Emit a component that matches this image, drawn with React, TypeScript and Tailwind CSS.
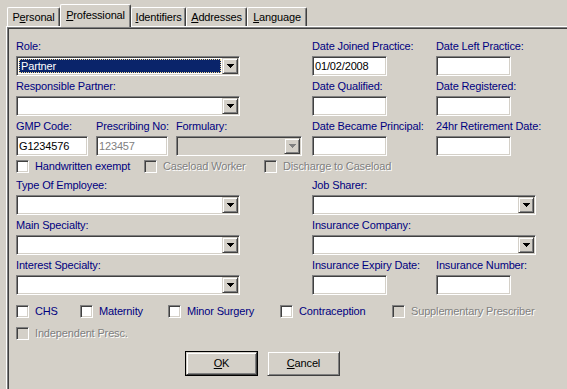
import React from "react";

const sunken =
  "border border-t-[#808080] border-l-[#808080] border-b-white border-r-white shadow-[inset_1px_1px_0_#404040,inset_-1px_-1px_0_#d4d0c8] p-px";
const raised =
  "border border-t-[#d4d0c8] border-l-[#d4d0c8] border-b-[#404040] border-r-[#404040] shadow-[inset_1px_1px_0_#ffffff,inset_-1px_-1px_0_#808080] bg-[#d4d0c8]";

function Arrow({ disabled }: { disabled?: boolean }) {
  const c = disabled ? "#808080" : "#000000";
  return (
    <svg width="7" height="4" viewBox="0 0 7 4" shapeRendering="crispEdges">
      <rect x="0" y="0" width="7" height="1" fill={c} />
      <rect x="1" y="1" width="5" height="1" fill={c} />
      <rect x="2" y="2" width="3" height="1" fill={c} />
      <rect x="3" y="3" width="1" height="1" fill={c} />
    </svg>
  );
}

function Combo({
  className,
  value,
  selected,
  disabled,
}: {
  className: string;
  value?: string;
  selected?: boolean;
  disabled?: boolean;
}) {
  return (
    <div className={`${sunken} h-[20px] flex ${disabled ? "bg-[#d4d0c8]" : "bg-white"} ${className}`}>
      <div className="flex-1 flex p-px">
        {selected ? (
          <div className="flex-1 bg-[#0a246a] border border-dotted border-[#f5db95] text-white flex items-center pl-px">
            {value}
          </div>
        ) : (
          <div className="flex-1 flex items-center pl-[2px]">{value}</div>
        )}
      </div>
      <div className={`${raised} w-[16px] h-[16px] flex items-center justify-center`}>
        <Arrow disabled={disabled} />
      </div>
    </div>
  );
}

function Edit({
  className,
  value,
  disabled,
}: {
  className: string;
  value?: string;
  disabled?: boolean;
}) {
  return (
    <div
      className={`${sunken} h-[20px] flex items-center pl-[2px] bg-white ${
        disabled ? "text-[#808080]" : "text-black"
      } ${className}`}
    >
      {value}
    </div>
  );
}

function Field({
  label,
  children,
  className,
}: {
  label: string;
  children: React.ReactNode;
  className?: string;
}) {
  return (
    <div className={`flex flex-col gap-[3px] ${className ?? ""}`}>
      <div className="h-[13px] text-[#000080] whitespace-nowrap">{label}</div>
      {children}
    </div>
  );
}

function Check({ label, disabled, className }: { label: string; disabled?: boolean; className?: string }) {
  return (
    <div className={`flex items-center gap-[6px] h-[13px] ${className ?? ""}`}>
      <div className={`${sunken} w-[13px] h-[13px] shrink-0 ${disabled ? "bg-[#d4d0c8]" : "bg-white"}`} />
      <span
        className={`whitespace-nowrap ${
          disabled ? "text-[#808080] [text-shadow:1px_1px_0_#ffffff]" : "text-[#000080]"
        }`}
      >
        {label}
      </span>
    </div>
  );
}

function Tab({
  children,
  selected,
  className,
}: {
  children: React.ReactNode;
  selected?: boolean;
  className: string;
}) {
  return (
    <div
      className={`relative flex justify-center border-l border-t border-white border-r border-r-[#404040] shadow-[inset_-1px_0_0_#808080] rounded-tl-[2px] rounded-tr-[2px] bg-[#d4d0c8] text-black ${
        selected ? "h-[23px] -mb-px z-10 pt-[4px]" : "h-[19px] pt-[3px]"
      } ${className}`}
    >
      {children}
    </div>
  );
}

function RightDates({ a, b, aValue }: { a: string; b: string; aValue?: string }) {
  return (
    <div className="grid grid-cols-[124px_124px]">
      <Field label={a}>
        <Edit className="w-[75px]" value={aValue} />
      </Field>
      <Field label={b}>
        <Edit className="w-[75px]" />
      </Field>
    </div>
  );
}

export default function App() {
  return (
    <div className="w-[567px] h-[389px] overflow-hidden bg-[#d4d0c8] font-['Liberation_Sans',Arial,sans-serif] text-[11px] leading-[13px] tracking-[-0.15px] text-black select-none">
      <div className="flex items-end h-[26px] pl-[7px]">
        <Tab className="w-[53px]">
          <span>
            P<span className="underline">e</span>rsonal
          </span>
        </Tab>
        <Tab className="w-[71px]" selected>
          <span>
            <span className="underline">P</span>rofessional
          </span>
        </Tab>
        <Tab className="w-[55px]">
          <span>
            <span className="underline">I</span>dentifiers
          </span>
        </Tab>
        <Tab className="w-[61px]">
          <span>
            <span className="underline">A</span>ddresses
          </span>
        </Tab>
        <Tab className="w-[60px]">
          <span>
            <span className="underline">L</span>anguage
          </span>
        </Tab>
      </div>

      <div className="ml-[6px] border-l border-t border-white w-[600px] h-[400px]">
        <div className="border-l border-t border-[#808080] shadow-[inset_1px_1px_0_#404040] h-full pl-[8px] pt-[12px] flex flex-col">
          <div className="flex">
            <div className="w-[296px]">
              <Field label="Role:">
                <Combo className="w-[224px]" value="Partner" selected />
              </Field>
            </div>
            <RightDates a="Date Joined Practice:" b="Date Left Practice:" aValue="01/02/2008" />
          </div>

          <div className="flex mt-[4px]">
            <div className="w-[296px]">
              <Field label="Responsible Partner:">
                <Combo className="w-[224px]" />
              </Field>
            </div>
            <RightDates a="Date Qualified:" b="Date Registered:" />
          </div>

          <div className="flex mt-[4px]">
            <div className="w-[296px] grid grid-cols-[80px_80px_126px]">
              <Field label="GMP Code:">
                <Edit className="w-[72px]" value="G1234576" />
              </Field>
              <Field label="Prescribing No:">
                <Edit className="w-[72px]" value="123457" disabled />
              </Field>
              <Field label="Formulary:">
                <Combo className="w-[126px]" disabled />
              </Field>
            </div>
            <RightDates a="Date Became Principal:" b="24hr Retirement Date:" />
          </div>

          <div className="flex mt-[4px]">
            <Check className="w-[128px]" label="Handwritten exempt" />
            <Check className="w-[120px]" label="Caseload Worker" disabled />
            <Check label="Discharge to Caseload" disabled />
          </div>

          <div className="flex mt-[6px]">
            <div className="w-[296px]">
              <Field label="Type Of Employee:">
                <Combo className="w-[224px]" />
              </Field>
            </div>
            <Field label="Job Sharer:">
              <Combo className="w-[224px]" />
            </Field>
          </div>

          <div className="flex mt-[4px]">
            <div className="w-[296px]">
              <Field label="Main Specialty:">
                <Combo className="w-[224px]" />
              </Field>
            </div>
            <Field label="Insurance Company:">
              <Combo className="w-[224px]" />
            </Field>
          </div>

          <div className="flex mt-[4px]">
            <div className="w-[296px]">
              <Field label="Interest Specialty:">
                <Combo className="w-[224px]" />
              </Field>
            </div>
            <RightDates a="Insurance Expiry Date:" b="Insurance Number:" />
          </div>

          <div className="flex mt-[10px]">
            <Check className="w-[64px]" label="CHS" />
            <Check className="w-[88px]" label="Maternity" />
            <Check className="w-[112px]" label="Minor Surgery" />
            <Check className="w-[112px]" label="Contraception" />
            <Check label="Supplementary Prescriber" disabled />
          </div>

          <div className="flex mt-[9px]">
            <Check label="Independent Presc." disabled />
          </div>

          <div className="flex mt-[11px] ml-[169px] gap-[9px]">
            <div className="border border-black w-[73px] h-[25px]">
              <div className={`${raised} w-full h-full flex items-center justify-center`}>
                <span>
                  <span className="underline">O</span>K
                </span>
              </div>
            </div>
            <div className={`${raised} w-[73px] h-[25px] flex items-center justify-center`}>
              <span>
                <span className="underline">C</span>ancel
              </span>
            </div>
          </div>
        </div>
      </div>
    </div>
  );
}
